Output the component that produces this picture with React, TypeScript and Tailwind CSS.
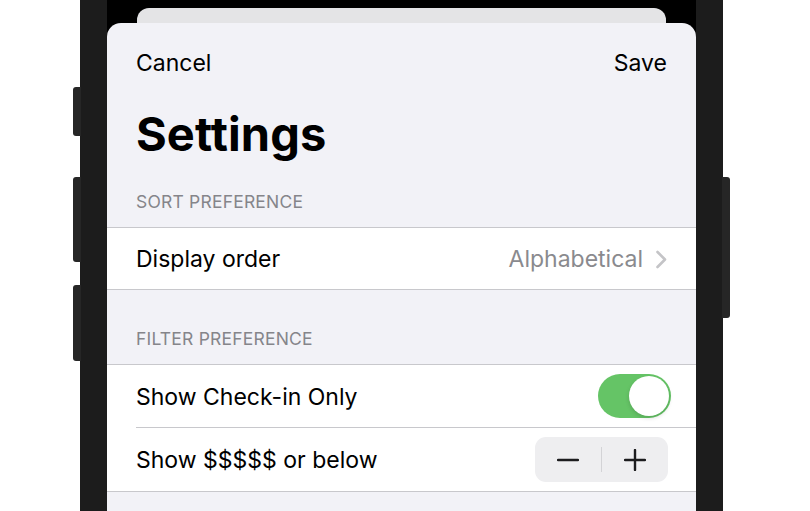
const font = { fontFamily: 'Inter, "Noto Sans", sans-serif' };

const Chevron = () => (
  <svg width="13" height="19" viewBox="0 0 13 19" fill="none">
    <path d="M2.5 2 L10 9.5 L2.5 17" stroke="#c4c4c7" strokeWidth="2.6" strokeLinecap="round" strokeLinejoin="round" />
  </svg>
);

const Toggle = () => (
  <div className="-mr-[3px] flex h-[44px] w-[73px] items-center justify-end rounded-full bg-[#65c466] px-[2px]">
    <div className="h-[40px] w-[40px] rounded-full bg-white shadow-[0_2px_4px_rgba(0,0,0,0.15)]" />
  </div>
);

const Stepper = () => (
  <div className="flex h-[45px] w-[133px] items-center rounded-[11px] bg-[#eeeef0]">
    <div className="flex flex-1 items-center justify-center">
      <svg width="22" height="22" viewBox="0 0 22 22">
        <path d="M1 11 H21" stroke="#1c1c1e" strokeWidth="2.4" strokeLinecap="round" />
      </svg>
    </div>
    <div className="h-[25px] w-[1.5px] bg-[#d3d3d6]" />
    <div className="flex flex-1 items-center justify-center">
      <svg width="22" height="22" viewBox="0 0 22 22">
        <path d="M1 11 H21 M11 1 V21" stroke="#1c1c1e" strokeWidth="2.4" strokeLinecap="round" />
      </svg>
    </div>
  </div>
);

const SectionHeader = ({ title, top }: { title: string; top: string }) => (
  <div className={`${top} pb-[15px] pl-[29px] text-[17.5px] leading-[21px] tracking-[0.2px] text-[#85858a]`}>{title}</div>
);

export default function App() {
  return (
    <div className="relative h-[511px] w-[810px] overflow-hidden bg-white" style={font}>
      {/* hardware buttons */}
      <div className="absolute left-[73px] top-[87px] h-[49px] w-[8px] rounded-l-[3px] bg-[#262626]" />
      <div className="absolute left-[73px] top-[177px] h-[85px] w-[8px] rounded-l-[3px] bg-[#262626]" />
      <div className="absolute left-[73px] top-[285px] h-[76px] w-[8px] rounded-l-[3px] bg-[#262626]" />
      <div className="absolute left-[722px] top-[177px] h-[141px] w-[8px] rounded-r-[3px] bg-[#262626]" />

      <div className="ml-[80px] h-full w-[643px] bg-[#1c1c1c] px-[27px]">
        <div className="flex h-full flex-col bg-black">
          <div className="mx-[30px] mt-[8px] h-[15px] rounded-t-[12px] bg-[#e4e4e6]" />
          <div className="flex-1 rounded-t-[14px] bg-[#f2f2f7]">
            <div className="flex items-center justify-between px-[29px] pt-[26px] text-[23px] leading-[29px] text-black">
              <span>Cancel</span>
              <span>Save</span>
            </div>
            <div className="pl-[29px] pt-[27px] text-[47px] font-bold leading-[58px] tracking-[0.1px] text-black">Settings</div>

            <SectionHeader title="SORT PREFERENCE" top="pt-[28px]" />
            <div className="flex h-[63px] items-center justify-between border-y border-[#c8c8cc] bg-white pl-[29px] pr-[28px] pt-[1px] text-[23px] text-black">
              <span>Display order</span>
              <div className="flex items-center gap-[12px]">
                <span className="text-[#8a8a8e]">Alphabetical</span>
                <Chevron />
              </div>
            </div>

            <SectionHeader title="FILTER PREFERENCE" top="pt-[38px]" />
            <div className="border-y border-[#c8c8cc] bg-white text-[23px] text-black">
              <div className="flex h-[62px] items-center justify-between pl-[29px] pr-[28px]">
                <span className="pt-[2px]">Show Check-in Only</span>
                <Toggle />
              </div>
              <div className="ml-[29px] h-px bg-[#c8c8cc]" />
              <div className="flex h-[63px] items-center justify-between pl-[29px] pr-[28px]">
                <span className="pt-[2px]">Show $$$$$ or below</span>
                <Stepper />
              </div>
            </div>
          </div>
        </div>
      </div>
    </div>
  );
}
